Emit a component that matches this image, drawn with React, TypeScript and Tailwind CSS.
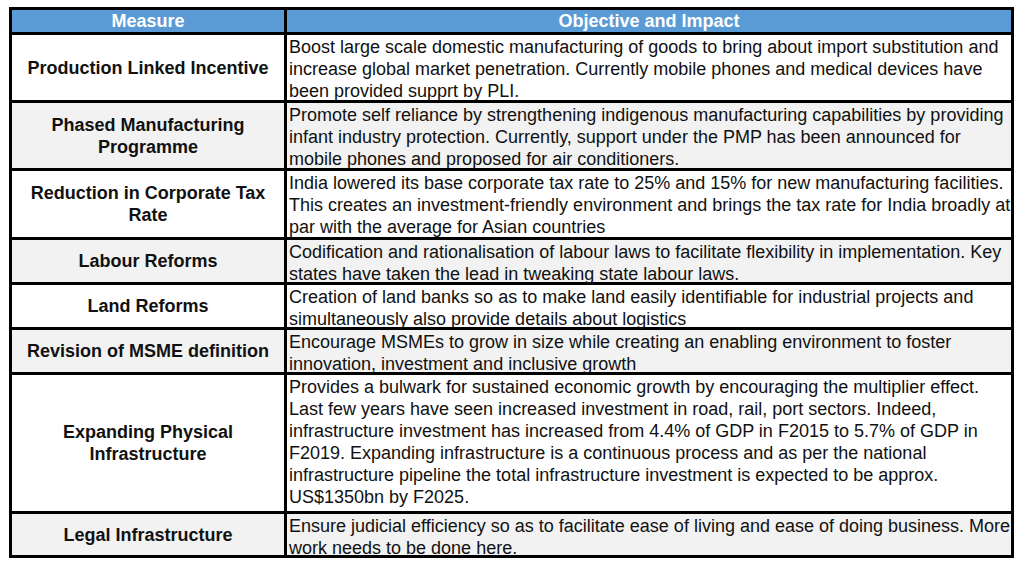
const rows: { measure: string[]; impact: string[]; h: string; bg: string }[] = [
  {
    measure: ["Production Linked Incentive"],
    impact: [
      "Boost large scale domestic manufacturing of goods to bring about import substitution and",
      "increase global market penetration. Currently mobile phones and medical devices have",
      "been provided supprt by PLI.",
    ],
    h: "h-[65px]",
    bg: "bg-white",
  },
  {
    measure: ["Phased Manufacturing", "Programme"],
    impact: [
      "Promote self reliance by strengthening indigenous manufacturing capabilities by providing",
      "infant industry protection. Currently, support under the PMP has been announced for",
      "mobile phones and proposed for air conditioners.",
    ],
    h: "h-[65px]",
    bg: "bg-[#f2f2f2]",
  },
  {
    measure: ["Reduction in Corporate Tax", "Rate"],
    impact: [
      "India lowered its base corporate tax rate to 25% and 15% for new manufacturing facilities.",
      "This creates an investment-friendly environment and brings the tax rate for India broadly at",
      "par with the average for Asian countries",
    ],
    h: "h-[66px]",
    bg: "bg-white",
  },
  {
    measure: ["Labour Reforms"],
    impact: [
      "Codification and rationalisation of labour laws to facilitate flexibility in implementation. Key",
      "states have taken the lead in tweaking state labour laws.",
    ],
    h: "h-[42px]",
    bg: "bg-[#f2f2f2]",
  },
  {
    measure: ["Land Reforms"],
    impact: [
      "Creation of land banks so as to make land easily identifiable for industrial projects and",
      "simultaneously also provide details about logistics",
    ],
    h: "h-[42px]",
    bg: "bg-white",
  },
  {
    measure: ["Revision of MSME definition"],
    impact: [
      "Encourage MSMEs to grow in size while creating an enabling environment to foster",
      "innovation, investment and inclusive growth",
    ],
    h: "h-[42px]",
    bg: "bg-[#f2f2f2]",
  },
  {
    measure: ["Expanding Physical", "Infrastructure"],
    impact: [
      "Provides a bulwark for sustained economic growth by encouraging the multiplier effect.",
      "Last few years have seen increased investment in road, rail, port sectors. Indeed,",
      "infrastructure investment has increased from 4.4% of GDP in F2015 to 5.7% of GDP in",
      "F2019. Expanding infrastructure is a continuous process and as per the national",
      "infrastructure pipeline the total infrastructure investment is expected to be approx.",
      "US$1350bn by F2025.",
    ],
    h: "h-[136px]",
    bg: "bg-white",
  },
  {
    measure: ["Legal Infrastructure"],
    impact: [
      "Ensure judicial efficiency so as to facilitate ease of living and ease of doing business. More",
      "work needs to be done here.",
    ],
    h: "h-[41px]",
    bg: "bg-[#f2f2f2]",
  },
];

export default function App() {
  return (
    <div className="w-[1024px] h-[564px] bg-white pt-[7px] pl-[9px] font-['Liberation_Sans',Arial,sans-serif] text-[18px] leading-[22px] text-[#111]">
      <div className="w-[1005px] grid grid-cols-[272px_724px] gap-[3px] p-[3px] bg-black">
        <div className="h-[22px] bg-[#5b9bd5] text-white font-bold text-center">Measure</div>
        <div className="h-[22px] bg-[#5b9bd5] text-white font-bold text-center">Objective and Impact</div>
        {rows.map((r, i) => (
          <div key={i} className="contents">
            <div className={`${r.h} ${r.bg} flex flex-col items-center justify-center font-bold text-center`}>
              {r.measure.map((l, j) => (
                <div key={j} className="whitespace-nowrap">{l}</div>
              ))}
            </div>
            <div className={`${r.h} ${r.bg} pl-[2px] pt-[1px]`}>
              {r.impact.map((l, j) => (
                <div key={j} className="whitespace-nowrap">{l}</div>
              ))}
            </div>
          </div>
        ))}
      </div>
    </div>
  );
}
